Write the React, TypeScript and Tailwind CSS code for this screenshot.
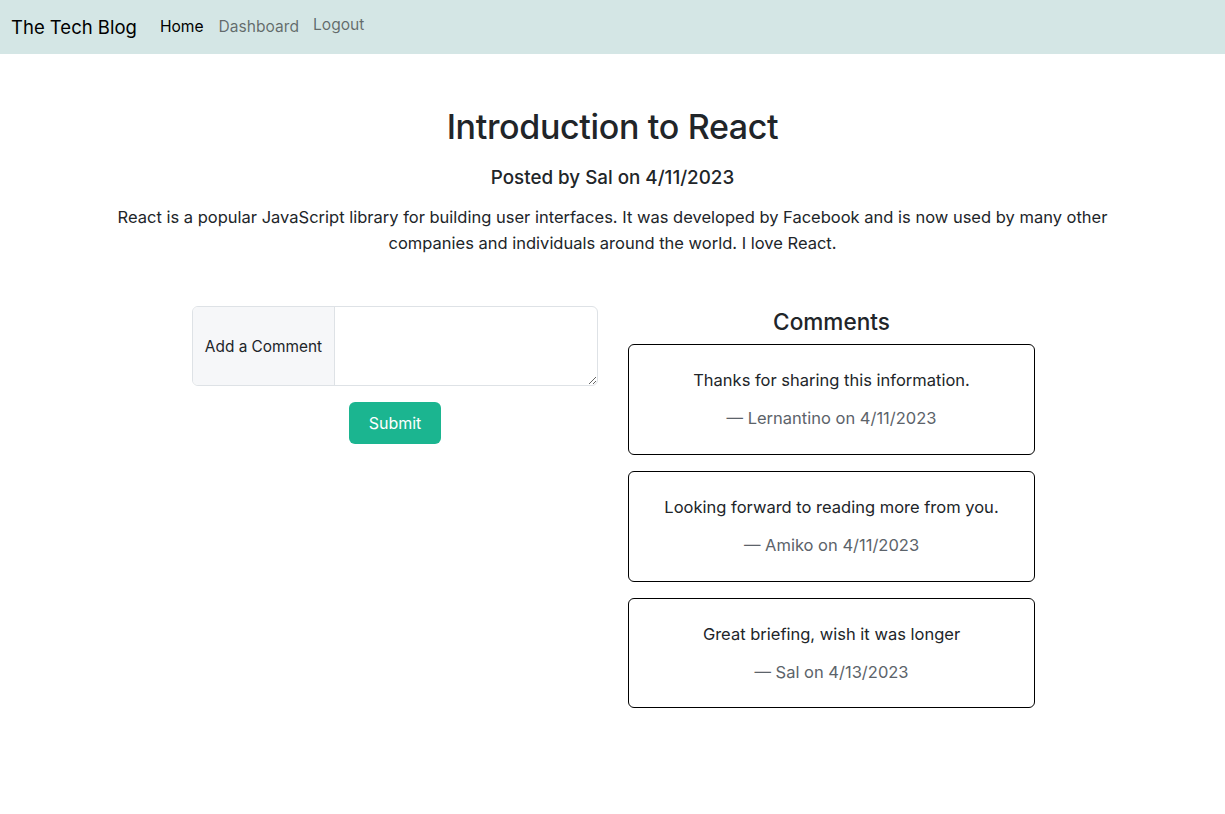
import React from "react";

const comments = [
  { text: "Thanks for sharing this information.", by: "— Lernantino on 4/11/2023" },
  { text: "Looking forward to reading more from you.", by: "— Amiko on 4/11/2023" },
  { text: "Great briefing, wish it was longer", by: "— Sal on 4/13/2023" },
];

export default function App() {
  return (
    <div className="min-h-[814px] bg-white text-[#212529]" style={{ fontFamily: "Inter, 'Noto Sans', sans-serif" }}>
      <nav className="h-[54px] bg-[#d4e6e5] flex items-center pl-[11px]">
        <span className="text-[18.5px] text-black mr-[23px] leading-none">The Tech Blog</span>
        <a className="text-[15.6px] text-black mr-[15px]">Home</a>
        <a className="text-[15.6px] text-black/55 mr-[14px]">Dashboard</a>
        <button className="text-[15.6px] text-black/55 -mt-[5px]">Logout</button>
      </nav>
      <main className="flex flex-col items-center">
        <h1 className="mt-[53px] text-[34px] font-medium leading-[1.2] tracking-[-0.01em]">Introduction to React</h1>
        <h5 className="mt-[19px] text-[18.8px] font-medium leading-[1.2]">Posted by Sal on 4/11/2023</h5>
        <p className="mt-[15px] w-[1010px] text-center text-[16.5px] leading-[26px]">
          React is a popular JavaScript library for building user interfaces. It was developed by Facebook and is now used by many other companies and individuals around the world. I love React.
        </p>
        <div className="mt-[50px] ml-[2px] flex gap-[30px]">
          <div className="w-[406px] flex flex-col items-center">
            <div className="flex w-full h-[80px] border border-[#dee2e6] rounded-[6px] overflow-hidden">
              <div className="w-[142px] bg-[#f6f7f9] border-r border-[#dee2e6] flex items-center justify-center text-[15.4px]">Add a Comment</div>
              <textarea className="flex-1 outline-none resize-y" />
            </div>
            <button className="mt-[16px] w-[92px] h-[42px] rounded-[6px] bg-[#1bb590] text-white text-[16px]">Submit</button>
          </div>
          <div className="w-[407px] flex flex-col">
            <h4 className="text-[22.6px] font-medium leading-[1.2] text-center mt-[2px] mb-[9px]">Comments</h4>
            <div className="flex flex-col gap-[16px]">
              {comments.map((c) => (
                <div key={c.text} className="h-[110.6px] border border-black rounded-[6px] flex flex-col items-center pt-[23px]">
                  <div className="text-[16.5px] leading-[24px]">{c.text}</div>
                  <div className="mt-[14px] text-[16.5px] leading-[24px] text-[#5c636a]">{c.by}</div>
                </div>
              ))}
            </div>
          </div>
        </div>
      </main>
    </div>
  );
}
